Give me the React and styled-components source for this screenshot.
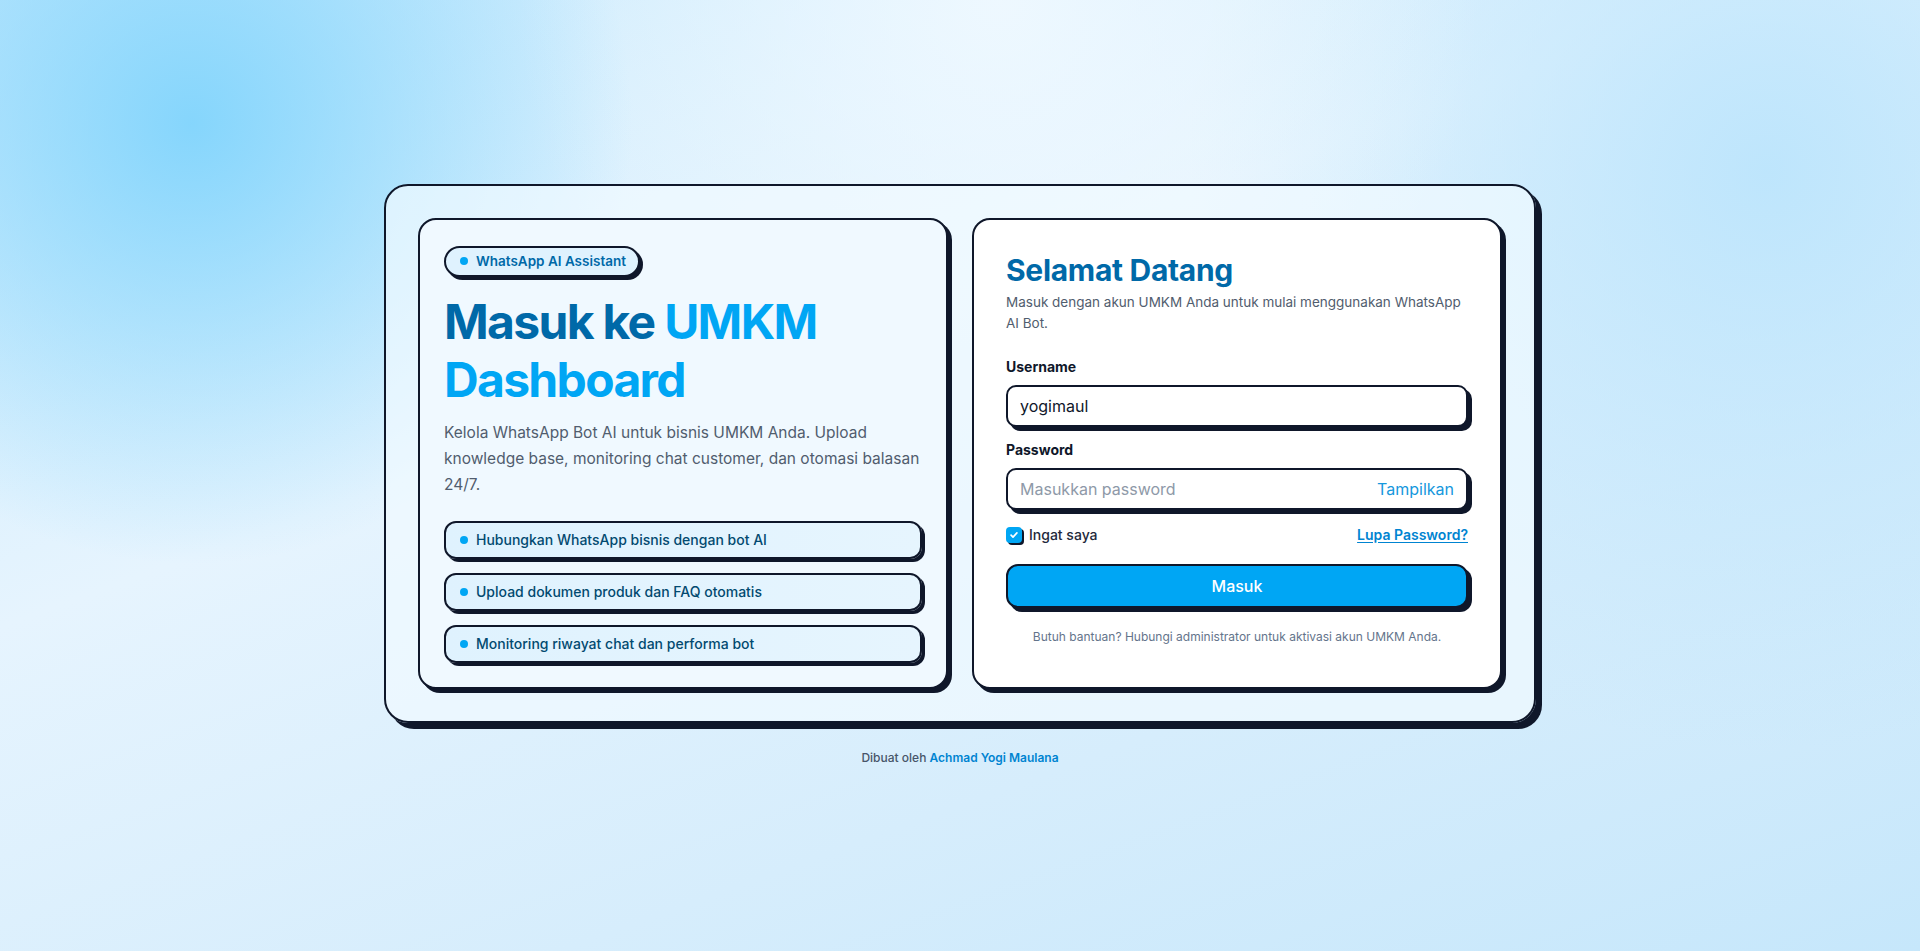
import React, { useState } from "react";
import styled, { createGlobalStyle } from "styled-components";

const ink = "#0f172a";

const GlobalStyle = createGlobalStyle`
  * { box-sizing: border-box; }
  html, body { margin: 0; padding: 0; }
  body {
    font-family: Inter, "Noto Sans", "Liberation Sans", sans-serif;
    color: ${ink};
    background:
      radial-gradient(circle at 10% 13%, rgba(125, 211, 252, 0.9) 0, rgba(125, 211, 252, 0) 23%),
      radial-gradient(circle at 52% 0%, rgba(240, 249, 255, 0.9) 0, rgba(240, 249, 255, 0) 35%),
      radial-gradient(circle at 92% 18%, rgba(186, 228, 252, 0.9) 0, rgba(186, 228, 252, 0) 30%),
      linear-gradient(160deg, #c9eafd 0%, #e6f4fe 38%, #d6edfc 70%, #c6e7fb 100%);
  }
`;

const Page = styled.main`
  min-height: 100vh;
  display: flex;
  flex-direction: column;
  align-items: center;
  justify-content: center;
  padding: 0 16px;
`;

const Shell = styled.section`
  width: 100%;
  max-width: 1152px;
  display: grid;
  grid-template-columns: 1fr 1fr;
  gap: 24px;
  padding: 32px;
  border: 2px solid ${ink};
  border-radius: 24px;
  background: rgba(240, 249, 255, 0.72);
  box-shadow: 6px 6px 0 ${ink};
`;

const Panel = styled.div`
  display: flex;
  flex-direction: column;
  border: 2px solid ${ink};
  border-radius: 18px;
  box-shadow: 4px 4px 0 ${ink};
  padding: ${(p) => (p.$form ? "32px" : "26px 24px 24px")};
  background: ${(p) => (p.$form ? "#ffffff" : "#f0f9ff")};
`;

const Badge = styled.span`
  align-self: flex-start;
  display: inline-flex;
  align-items: center;
  gap: 8px;
  height: 31px;
  padding: 0 12px 0 14px;
  border: 2px solid ${ink};
  border-radius: 999px;
  background: #dff2fe;
  box-shadow: 3px 3px 0 ${ink};
  color: #0069a8;
  font-size: 13.5px;
  font-weight: 600;
`;

const Dot = styled.span`
  width: 8px;
  height: 8px;
  border-radius: 50%;
  background: #00a6f4;
  flex-shrink: 0;
`;

const Heading = styled.h1`
  margin: 16px 0 0;
  font-size: 48px;
  line-height: 58.5px;
  font-weight: 700;
  letter-spacing: -0.035em;
  color: #0069a8;
`;

const Accent = styled.span`
  color: #00a6f4;
`;

const Lead = styled.p`
  margin: 10px 0 0;
  font-size: 15.5px;
  line-height: 26px;
  color: #515d6e;
`;

const FeatureList = styled.ul`
  list-style: none;
  margin: 23px 0 0;
  padding: 0;
  display: flex;
  flex-direction: column;
  gap: 14px;
`;

const Feature = styled.li`
  display: flex;
  align-items: center;
  gap: 8px;
  height: 38px;
  padding: 0 14px;
  border: 2px solid ${ink};
  border-radius: 12px;
  background: linear-gradient(90deg, #dff2fe 0%, #e6f5fe 100%);
  box-shadow: 3px 3px 0 ${ink};
  color: #024a70;
  font-size: 14px;
  font-weight: 500;
`;

const Title = styled.h2`
  margin: 0;
  font-size: 30px;
  line-height: 36px;
  font-weight: 700;
  letter-spacing: -0.01em;
  color: #0069a8;
`;

const Subtitle = styled.p`
  margin: 4px 0 0;
  font-size: 13.5px;
  line-height: 21px;
  color: #515d6e;
`;

const Form = styled.form`
  margin-top: 23px;
  display: flex;
  flex-direction: column;
`;

const Field = styled.div`
  display: flex;
  flex-direction: column;
  margin-bottom: ${(p) => p.$gap || "0"};
`;

const Label = styled.label`
  font-size: 14px;
  line-height: 20px;
  font-weight: 700;
  color: ${ink};
  margin-bottom: 8px;
`;

const InputBox = styled.div`
  display: flex;
  align-items: center;
  height: 42px;
  padding: 0 12px;
  border: 2px solid ${ink};
  border-radius: 10px;
  background: #ffffff;
  box-shadow: 4px 4px 0 ${ink};
`;

const Input = styled.input`
  flex: 1;
  min-width: 0;
  border: none;
  outline: none;
  background: transparent;
  font: inherit;
  font-size: 16px;
  color: ${ink};
  padding: 0;

  &::placeholder {
    color: #8e99a8;
  }
`;

const Toggle = styled.button`
  border: none;
  background: none;
  padding: 0;
  font: inherit;
  font-size: 16px;
  font-weight: 400;
  color: #1597dd;
  cursor: pointer;
`;

const OptionsRow = styled.div`
  display: flex;
  align-items: center;
  justify-content: space-between;
  margin-top: 15px;
  height: 20px;
`;

const Remember = styled.label`
  display: flex;
  align-items: center;
  gap: 7px;
  font-size: 14px;
  font-weight: 500;
  color: #1e293b;
  cursor: pointer;
`;

const Check = styled.span`
  width: 16px;
  height: 16px;
  border-radius: 4px;
  background: #00a6f4;
  box-shadow: 2px 2px 0 ${ink};
  display: inline-flex;
  align-items: center;
  justify-content: center;
`;

const Forgot = styled.a`
  font-size: 14px;
  font-weight: 600;
  color: #0084d1;
  text-decoration: underline;
  text-underline-offset: 2px;
`;

const Submit = styled.button`
  margin-top: 19px;
  height: 44px;
  border: 2px solid ${ink};
  border-radius: 12px;
  background: #00a6f4;
  box-shadow: 4px 4px 0 ${ink};
  color: #ffffff;
  font: inherit;
  font-size: 16px;
  font-weight: 500;
  cursor: pointer;
`;

const Help = styled.p`
  margin: 21px 0 0;
  text-align: center;
  font-size: 12px;
  line-height: 16px;
  color: #64748b;
`;

const Footer = styled.footer`
  margin-top: 25px;
  font-size: 12px;
  line-height: 20px;
  font-weight: 500;
  color: #475569;
`;

const Author = styled.span`
  color: #0084d1;
  font-weight: 600;
`;

const features = [
  "Hubungkan WhatsApp bisnis dengan bot AI",
  "Upload dokumen produk dan FAQ otomatis",
  "Monitoring riwayat chat dan performa bot",
];

export default function App() {
  const [username, setUsername] = useState("yogimaul");
  const [password, setPassword] = useState("");
  const [show, setShow] = useState(false);

  return (
    <>
      <GlobalStyle />
      <Page>
        <Shell>
          <Panel>
            <Badge>
              <Dot />
              WhatsApp AI Assistant
            </Badge>
            <Heading>
              Masuk ke <Accent>UMKM Dashboard</Accent>
            </Heading>
            <Lead>
              Kelola WhatsApp Bot AI untuk bisnis UMKM Anda. Upload knowledge
              base, monitoring chat customer, dan otomasi balasan 24/7.
            </Lead>
            <FeatureList>
              {features.map((f) => (
                <Feature key={f}>
                  <Dot />
                  {f}
                </Feature>
              ))}
            </FeatureList>
          </Panel>

          <Panel $form>
            <Title>Selamat Datang</Title>
            <Subtitle>
              Masuk dengan akun UMKM Anda untuk mulai menggunakan WhatsApp AI
              Bot.
            </Subtitle>
            <Form onSubmit={(e) => e.preventDefault()}>
              <Field $gap="13px">
                <Label htmlFor="username">Username</Label>
                <InputBox>
                  <Input
                    id="username"
                    value={username}
                    onChange={(e) => setUsername(e.target.value)}
                  />
                </InputBox>
              </Field>
              <Field>
                <Label htmlFor="password">Password</Label>
                <InputBox>
                  <Input
                    id="password"
                    type={show ? "text" : "password"}
                    placeholder="Masukkan password"
                    value={password}
                    onChange={(e) => setPassword(e.target.value)}
                  />
                  <Toggle type="button" onClick={() => setShow(!show)}>
                    Tampilkan
                  </Toggle>
                </InputBox>
              </Field>
              <OptionsRow>
                <Remember>
                  <Check>
                    <svg width="10" height="10" viewBox="0 0 12 12" fill="none">
                      <path
                        d="M2.5 6.2l2.3 2.3 4.7-5"
                        stroke="#fff"
                        strokeWidth="2"
                        strokeLinecap="round"
                        strokeLinejoin="round"
                      />
                    </svg>
                  </Check>
                  Ingat saya
                </Remember>
                <Forgot href="#">Lupa Password?</Forgot>
              </OptionsRow>
              <Submit type="submit">Masuk</Submit>
            </Form>
            <Help>
              Butuh bantuan? Hubungi administrator untuk aktivasi akun UMKM
              Anda.
            </Help>
          </Panel>
        </Shell>
        <Footer>
          Dibuat oleh <Author>Achmad Yogi Maulana</Author>
        </Footer>
      </Page>
    </>
  );
}
